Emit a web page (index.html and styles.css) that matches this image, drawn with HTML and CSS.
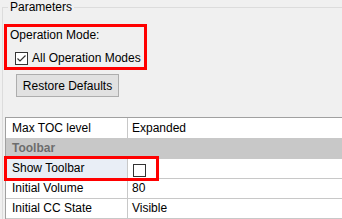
FILE: index.html
```html
<!DOCTYPE html>
<html>
<head>
<meta charset="utf-8">
<link rel="stylesheet" href="styles.css">
</head>
<body>
<fieldset class="group">
  <legend class="group-title">Parameters</legend>
  <div class="mode-box">
    <div class="mode-label">Operation Mode:</div>
    <div class="check-row">
      <span class="cb"><svg width="11" height="11" viewBox="0 0 11 11"><polyline points="1.5,5.5 4,8 9.5,2.5" fill="none" stroke="#333" stroke-width="1.2"/></svg></span>
      <span>All Operation Modes</span>
    </div>
  </div>
  <button class="btn">Restore Defaults</button>
  <div class="grid-wrap">
    <div class="grid">
      <div class="row first"><div class="name">Max TOC level</div><div class="value">Expanded</div></div>
      <div class="row cat"><div class="cat-name">Toolbar</div></div>
      <div class="row"><div class="name sel">Show Toolbar</div><div class="value"><span class="cb cb-cell"></span></div></div>
      <div class="row"><div class="name">Initial Volume</div><div class="value">80</div></div>
      <div class="row"><div class="name">Initial CC State</div><div class="value">Visible</div></div>
    </div>
    <div class="highlight"></div>
  </div>
</fieldset>
</body>
</html>
```

FILE: styles.css
```css
html, body {
  margin: 0;
  padding: 0;
  overflow: hidden;
  background: #f0f0f0;
  width: 342px;
  height: 219px;
}
body {
  font-family: "Liberation Sans", Arial, sans-serif;
  font-size: 12px;
  color: #000;
}
.group {
  margin: 0 0 0 2px;
  padding: 0;
  border: 1px solid #dcdcdc;
  border-right: 0;
  border-bottom: 0;
  min-width: 0;
}
.group-title {
  margin-left: 5px;
  padding: 0 2px;
  line-height: 15px;
  font-size: 12px;
}
.mode-box {
  margin: 9px 0 0 1px;
  width: 143px;
  height: 46px;
  box-sizing: border-box;
  border: 3px solid #ff0000;
  padding: 1px 0 0 3px;
}
.mode-label {
  line-height: 15px;
}
.check-row {
  display: flex;
  align-items: center;
  gap: 4px;
  margin: 8px 0 0 5px;
  height: 15px;
  line-height: 15px;
}
.cb {
  display: block;
  width: 13px;
  height: 13px;
  box-sizing: border-box;
  border: 1px solid #333;
  background: #fff;
  flex: none;
}
.cb svg {
  display: block;
}
.btn {
  display: block;
  margin: 4px 0 0 13px;
  width: 103px;
  height: 23px;
  box-sizing: border-box;
  border: 1px solid #adadad;
  background: #e1e1e1;
  font-family: "Liberation Sans", Arial, sans-serif;
  font-size: 12px;
  color: #000;
  padding: 0;
}
.grid-wrap {
  position: relative;
  margin: 20px 0 0 2px;
}
.grid {
  width: 345px;
  border-top: 1px solid #a0a0a0;
  border-left: 1px solid #a0a0a0;
  background: #fff;
}
.row {
  display: flex;
  height: 20px;
  box-sizing: border-box;
  border-bottom: 1px solid #c8c8c8;
  line-height: 19px;
}
.row.first {
  height: 21px;
  line-height: 20px;
}
.name {
  width: 122px;
  box-sizing: border-box;
  border-right: 1px solid #c8c8c8;
  padding-left: 6px;
  flex: none;
}
.name.sel {
  background: #e9eef6;
}
.value {
  padding-left: 4px;
  flex: 1;
}
.row.cat {
  background: #c8c8c8;
}
.cat-name {
  padding-left: 6px;
  font-weight: bold;
  color: #6d6d6d;
}
.cb-cell {
  margin: 5px 0 0 1px;
}
.highlight {
  position: absolute;
  left: -1px;
  top: 39px;
  width: 155px;
  height: 25px;
  box-sizing: border-box;
  border: 3px solid #ff0000;
}
```
